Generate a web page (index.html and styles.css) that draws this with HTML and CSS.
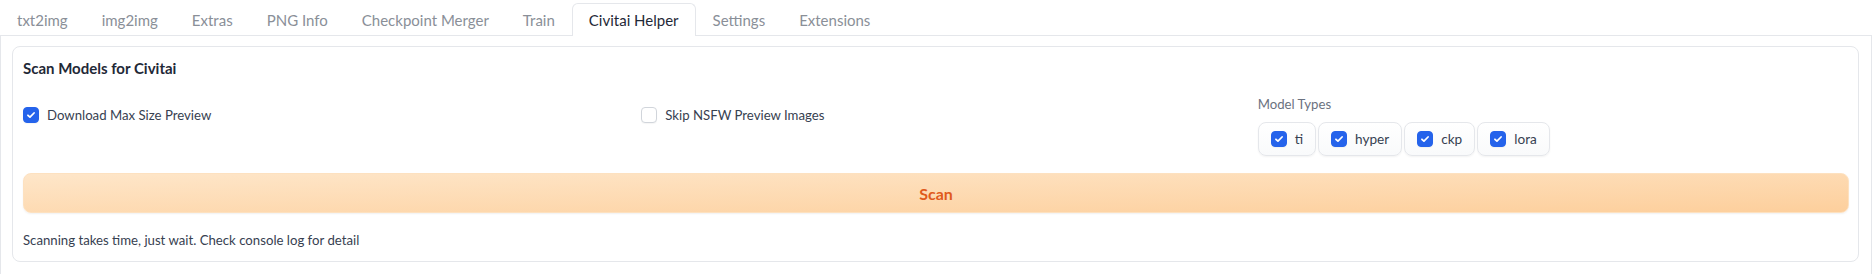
FILE: index.html
```html
<!DOCTYPE html>
<html>
<head>
<meta charset="utf-8">
<link rel="stylesheet" href="styles.css">
</head>
<body>
<div class="tabs">
  <div class="tabnav">
    <button class="tab">txt2img</button>
    <button class="tab">img2img</button>
    <button class="tab">Extras</button>
    <button class="tab">PNG Info</button>
    <button class="tab">Checkpoint Merger</button>
    <button class="tab">Train</button>
    <button class="tab active">Civitai Helper</button>
    <button class="tab">Settings</button>
    <button class="tab">Extensions</button>
  </div>
  <div class="tabitem">
    <div class="panel">
      <div class="title">Scan Models for Civitai</div>
      <div class="row">
        <label class="check single">
          <span class="box checked"><svg viewBox="0 0 16 16"><path d="M4.5 8.3l2.3 2.2 4.7-4.8" fill="none" stroke="#fff" stroke-width="2" stroke-linecap="round" stroke-linejoin="round"/></svg></span>
          <span class="lbl">Download Max Size Preview</span>
        </label>
        <label class="check single">
          <span class="box"></span>
          <span class="lbl">Skip NSFW Preview Images</span>
        </label>
        <div class="group">
          <div class="glabel">Model Types</div>
          <div class="chips">
            <label class="chip"><span class="box checked"><svg viewBox="0 0 16 16"><path d="M4.5 8.3l2.3 2.2 4.7-4.8" fill="none" stroke="#fff" stroke-width="2" stroke-linecap="round" stroke-linejoin="round"/></svg></span><span class="lbl">ti</span></label>
            <label class="chip"><span class="box checked"><svg viewBox="0 0 16 16"><path d="M4.5 8.3l2.3 2.2 4.7-4.8" fill="none" stroke="#fff" stroke-width="2" stroke-linecap="round" stroke-linejoin="round"/></svg></span><span class="lbl">hyper</span></label>
            <label class="chip"><span class="box checked"><svg viewBox="0 0 16 16"><path d="M4.5 8.3l2.3 2.2 4.7-4.8" fill="none" stroke="#fff" stroke-width="2" stroke-linecap="round" stroke-linejoin="round"/></svg></span><span class="lbl">ckp</span></label>
            <label class="chip"><span class="box checked"><svg viewBox="0 0 16 16"><path d="M4.5 8.3l2.3 2.2 4.7-4.8" fill="none" stroke="#fff" stroke-width="2" stroke-linecap="round" stroke-linejoin="round"/></svg></span><span class="lbl">lora</span></label>
          </div>
        </div>
      </div>
      <button class="scan">Scan</button>
      <div class="note">Scanning takes time, just wait. Check console log for detail</div>
    </div>
  </div>
</div>
</body>
</html>
```

FILE: styles.css
```css
* { box-sizing: border-box; }
body {
  margin: 0;
  background: #fff;
  font-family: "Lato", "Noto Sans", sans-serif;
  color: #374151;
  font-size: 13.2px;
}
.tabs { margin-right: 2px; }
.tabnav {
  display: flex;
  padding-top: 3px;
  border-bottom: 1px solid #e5e7eb;
}
.tab {
  height: 33px;
  margin-bottom: -1px;
  padding: 0 16px 1px 16px;
  border: 1px solid transparent;
  border-bottom: none;
  border-radius: 6px 6px 0 0;
  background: transparent;
  font-family: inherit;
  font-size: 15px;
  color: #8a8f98;
  cursor: pointer;
}
.tab.active {
  background: #fff;
  border-color: #e5e7eb;
  color: #1f2937;
}
.tabitem {
  border: 1px solid #e5e7eb;
  border-top: none;
  padding: 10px 12px 12px 11px;
}
.panel {
  border: 1px solid #e5e7eb;
  border-radius: 8px;
  padding: 10px 9px 11px 10px;
  display: flex;
  flex-direction: column;
}
.title {
  font-size: 15px;
  font-weight: 700;
  line-height: 22px;
  color: #1f2937;
}
.row {
  margin-top: 15px;
  display: grid;
  grid-template-columns: 1fr 1fr 1fr;
  column-gap: 29px;
  align-items: start;
  height: 62px;
}
.check {
  display: flex;
  align-items: center;
  gap: 8px;
  line-height: 20px;
}
.check.single { margin-top: 11px; }
.box {
  width: 16px;
  height: 16px;
  border-radius: 4px;
  border: 1px solid #d1d5db;
  background: #fff;
  box-shadow: 0 1px 1px rgba(0,0,0,0.04);
  display: inline-flex;
  flex: none;
}
.box.checked {
  background: #2563eb;
  border-color: #2563eb;
}
.box svg { width: 14px; height: 14px; }
.lbl { color: #374151; }
.group { margin-left: -2px; }
.glabel {
  line-height: 20px;
  color: #6b7280;
}
.chips {
  margin-top: 8px;
  display: flex;
  gap: 2px;
}
.chip {
  height: 34px;
  display: inline-flex;
  align-items: center;
  gap: 8px;
  padding: 0 12px 0 12px;
  border: 1px solid #e5e7eb;
  border-radius: 8px;
  background: linear-gradient(to top, #f9fafb, #ffffff);
  box-shadow: 0 1px 2px rgba(0,0,0,0.05);
}
.chip .lbl { font-size: 13.6px; }
.scan {
  margin-top: 17px;
  height: 40px;
  border: 1px solid #fde1c0;
  border-radius: 8px;
  background: linear-gradient(to bottom right, #fee6c9, #fdcf9c);
  box-shadow: 0 1px 2px rgba(0,0,0,0.06);
  color: #e05a1c;
  font-family: inherit;
  font-size: 16px;
  font-weight: 700;
}
.note {
  margin-top: 17px;
  line-height: 20px;
  color: #374151;
}
```
